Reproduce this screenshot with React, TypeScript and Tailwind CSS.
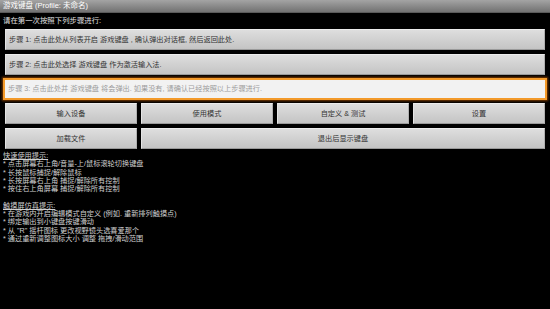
import React from "react";

const font = { fontFamily: '"Liberation Sans", "Noto Sans CJK SC", sans-serif' };

function Btn({ children, className = "" }: { children?: React.ReactNode; className?: string }) {
  return (
    <div
      className={
        "flex items-center justify-center h-[21px] bg-gradient-to-b from-[#dedede] to-[#c4c4c4] border border-t-[#ececec] border-l-[#e4e4e4] border-r-[#b0b0b0] border-b-[#9a9a9a] text-[#333333] text-[7.2px] " +
        className
      }
    >
      {children}
    </div>
  );
}

export default function App() {
  return (
    <div className="w-[550px] h-[309px] bg-black overflow-hidden leading-none" style={font}>
      <div className="h-[13px] bg-gradient-to-b from-[#a4a4a4] to-[#727272] border-b border-[#5a5a5a] flex items-center px-[3px] text-white text-[7.5px]">
        游戏键盘 (Profile: 未命名)
      </div>
      <div className="h-[16px] flex items-center px-[3px] text-[#e0e0e0] text-[7.4px]">请在第一次按照下列步骤进行:</div>
      <div className="px-[5px] flex flex-col">
        <Btn className="justify-start pl-[3px]">步骤 1: 点击此处从列表开启 游戏键盘 , 确认弹出对话框, 然后返回此处.</Btn>
        <Btn className="justify-start pl-[3px] mt-[4px]">步骤 2: 点击此处选择 游戏键盘 作为激活输入法.</Btn>
      </div>
      <div className="px-[3px] mt-[3px]">
        <div className="h-[22px] bg-[#f2f2f2] border-2 border-[#f39a2a] shadow-[0_0_2px_1px_#7a3a00] flex items-center pl-[3px] text-[#9c9c9c] text-[7.2px]">
          步骤 3: 点击此处并 游戏键盘 将会弹出. 如果没有, 请确认已经按照以上步骤进行.
        </div>
      </div>
      <div className="px-[5px] mt-[3px] grid grid-cols-4 gap-x-[4px] gap-y-[4px]">
        <Btn>输入设备</Btn>
        <Btn>使用模式</Btn>
        <Btn>自定义 &amp; 测试</Btn>
        <Btn>设置</Btn>
        <Btn>加载文件</Btn>
        <Btn className="col-span-3">退出后显示键盘</Btn>
      </div>
      <div className="px-[3px] mt-[3px] text-[#d0d0d0] text-[7.2px] leading-[8.3px]">
        <div className="underline">快速使用提示:</div>
        <div>* 点击屏幕右上角/音量-上/鼠标滚轮切换键盘</div>
        <div>* 长按鼠标捕捉/解除鼠标</div>
        <div>* 长按屏幕右上角 捕捉/解除所有控制</div>
        <div>* 按住右上角屏幕 捕捉/解除所有控制</div>
        <div className="h-[8.3px]"></div>
        <div className="underline">触摸屏仿真提示:</div>
        <div>* 在游戏内开启编辑模式自定义 (例如. 重新排列触摸点)</div>
        <div>* 绑定输出到小键盘按键滑动</div>
        <div>* 从 "R" 摇杆图标 更改视野镜头选喜爱那个</div>
        <div>* 通过重新调整图标大小 调整 拖拽/滑动范围</div>
      </div>
    </div>
  );
}
